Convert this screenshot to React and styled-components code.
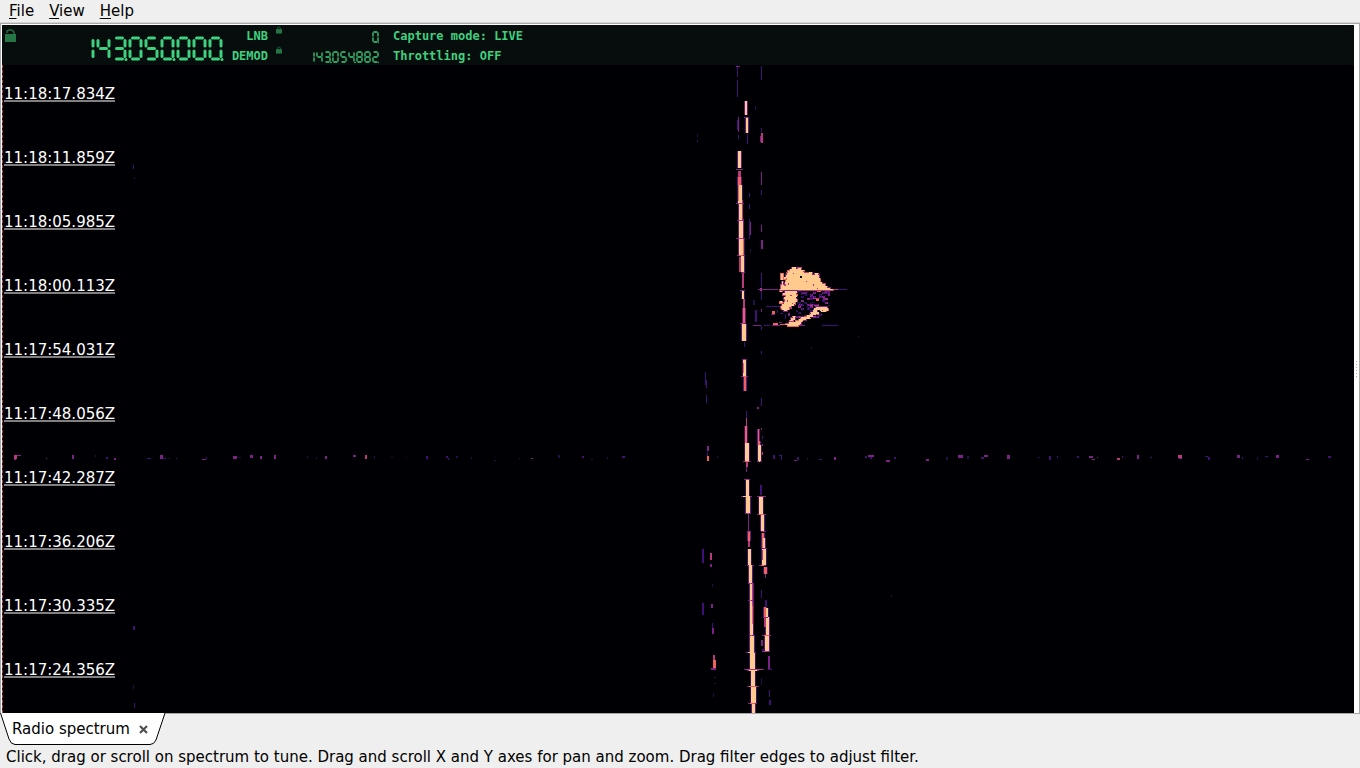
import React from 'react'
import styled, { createGlobalStyle } from 'styled-components';

const GlobalStyle = createGlobalStyle`
    body {
        margin: 0;
        background: #efefef;
        color: #000;
        font-family: "DejaVu Sans", sans-serif;
        font-size: 15px;
    }
`;

// magma palette, weakest signal first
const COLORS = ['#1c1245', '#3f1078', '#7c2287', '#b93a7c', '#f1605d', '#feca8d'];

// [x, y, width, height, level]
const CARRIER = [
    [737, 65, 1, 12, 1], [737, 80, 1, 17, 1], [738, 117, 1, 15, 2], [737, 120, 1, 10, 1], [738, 135, 1, 4, 1],
    [738, 151, 3, 17, 5], [737, 169, 5, 1, 1], [738, 171, 3, 8, 3], [738, 177, 3, 8, 4],
    [738, 185, 4, 18, 5], [738, 185, 1, 16, 4], [742, 200, 1, 20, 3], [739, 203, 3, 17, 5],
    [739, 220, 4, 18, 5], [743, 219, 1, 18, 2], [739, 238, 4, 17, 5], [743, 238, 1, 17, 4],
    [741, 255, 3, 17, 5], [739, 257, 2, 15, 3], [742, 273, 2, 15, 3], [742, 290, 2, 9, 5], [743, 299, 2, 9, 3],
    [743, 308, 2, 15, 4], [742, 324, 4, 17, 5], [744, 342, 1, 5, 1], [743, 359, 3, 17, 5], [743, 363, 1, 10, 4],
    [744, 377, 2, 14, 4], [746, 411, 1, 9, 1], [746, 418, 1, 10, 3], [745, 426, 2, 18, 4],
    [745, 443, 4, 19, 5], [746, 462, 2, 5, 3], [746, 467, 1, 5, 2], [746, 479, 3, 17, 5], [746, 496, 4, 17, 5],
    [748, 514, 1, 17, 2], [748, 531, 2, 10, 4], [748, 541, 2, 6, 3], [748, 549, 3, 17, 5], [749, 566, 3, 17, 5],
    [750, 583, 3, 17, 5], [750, 600, 3, 17, 5], [752, 583, 1, 34, 3], [750, 617, 3, 18, 5], [752, 606, 1, 18, 4],
    [750, 635, 4, 17, 5], [750, 652, 5, 18, 5], [751, 670, 4, 16, 5], [751, 686, 5, 17, 5], [752, 703, 3, 10, 5],
    [745, 101, 2, 14, 5], [746, 118, 2, 15, 5], [747, 134, 1, 10, 1],
];

const SECOND = [
    [758, 429, 1, 16, 4], [758, 441, 2, 5, 4], [758, 445, 3, 17, 5], [761, 428, 1, 2, 2], [762, 436, 1, 3, 1],
    [762, 444, 1, 2, 2], [762, 452, 1, 3, 3], [760, 485, 2, 10, 1], [759, 496, 4, 18, 5], [761, 514, 3, 17, 5],
    [762, 533, 2, 15, 4], [763, 538, 2, 10, 5], [762, 548, 4, 17, 5], [762, 550, 1, 10, 3], [764, 567, 3, 7, 4],
    [765, 574, 1, 4, 2], [761, 590, 1, 8, 1], [765, 600, 2, 7, 1], [764, 607, 2, 10, 4], [766, 608, 2, 10, 5],
    [764, 617, 2, 10, 3], [766, 617, 3, 18, 5], [765, 635, 4, 17, 5], [761, 640, 2, 6, 2], [762, 649, 3, 3, 1],
    [768, 656, 2, 14, 2], [768, 669, 4, 1, 1], [769, 690, 1, 7, 1], [769, 700, 2, 5, 1], [761, 678, 1, 7, 0],
];

const FAINT = [
    [761, 66, 1, 14, 1], [761, 128, 1, 4, 1], [761, 133, 2, 10, 3], [760, 136, 1, 6, 2], [761, 172, 1, 13, 2],
    [761, 190, 1, 5, 1], [761, 225, 1, 7, 2], [761, 240, 2, 9, 2], [761, 273, 1, 14, 1], [761, 291, 1, 9, 1],
    [760, 288, 2, 3, 3], [761, 309, 1, 3, 2], [761, 326, 1, 4, 1], [761, 351, 1, 3, 1], [761, 398, 1, 8, 1],
    [757, 407, 2, 2, 2], [755, 106, 1, 4, 0], [749, 193, 1, 4, 1], [749, 204, 1, 5, 1], [749, 219, 1, 20, 1],
    [750, 222, 1, 13, 2], [750, 249, 1, 4, 0], [753, 300, 2, 5, 0], [755, 310, 2, 12, 1], [697, 134, 1, 3, 0],
    [697, 140, 1, 2, 1], [705, 372, 1, 13, 1], [706, 380, 1, 8, 1], [706, 395, 1, 8, 1], [707, 446, 2, 5, 2],
    [707, 452, 1, 5, 1], [707, 456, 2, 5, 4], [702, 549, 2, 14, 1], [710, 553, 2, 7, 3], [710, 564, 2, 3, 2],
    [712, 584, 1, 3, 0], [702, 603, 2, 12, 1], [711, 604, 2, 4, 2], [712, 623, 1, 6, 1], [712, 628, 2, 6, 2],
    [713, 655, 2, 5, 3], [713, 660, 3, 8, 4], [711, 668, 5, 2, 2], [714, 677, 2, 1, 0], [714, 683, 2, 1, 0],
    [713, 693, 1, 4, 0], [133, 165, 1, 4, 1], [134, 177, 1, 2, 0], [133, 626, 2, 4, 1], [133, 685, 1, 4, 0],
    [134, 703, 1, 5, 1], [811, 347, 1, 2, 0], [891, 595, 1, 2, 0], [858, 336, 1, 1, 0],
];

// horizontal splashes across the carriers: [x, y, width, level]
const SPLASHES = [
    [736, 66, 4, 2], [744, 117, 5, 3], [736, 169, 7, 2], [736, 203, 8, 3], [737, 220, 7, 3], [736, 238, 9, 3],
    [737, 255, 8, 4], [741, 272, 4, 3], [740, 290, 5, 2], [740, 323, 6, 3], [742, 359, 5, 3], [741, 376, 7, 4],
    [743, 461, 8, 4], [757, 461, 5, 5], [744, 479, 6, 3], [741, 496, 11, 5], [745, 513, 6, 3], [747, 531, 4, 3],
    [747, 565, 7, 5], [748, 583, 4, 4], [748, 600, 5, 4], [749, 635, 5, 4], [746, 652, 10, 5], [744, 669, 20, 3],
    [747, 670, 12, 5], [747, 686, 12, 4], [748, 703, 9, 4], [757, 496, 9, 3], [757, 514, 9, 4], [761, 531, 5, 3],
    [759, 565, 7, 4], [762, 548, 5, 3], [763, 617, 5, 3], [762, 635, 9, 4], [762, 651, 8, 3],
];

// one broadband burst across the whole width: [x, y, width, height, level]
const BURST = [
    [14, 455, 3, 4, 3], [17, 455, 4, 1, 2], [14, 459, 2, 1, 2], [46, 458, 1, 1, 2], [72, 455, 2, 4, 2],
    [95, 455, 1, 2, 0], [106, 457, 2, 2, 1], [114, 458, 2, 2, 2], [147, 458, 4, 1, 1], [160, 455, 3, 4, 2],
    [163, 458, 3, 1, 1], [169, 458, 1, 1, 1], [176, 458, 1, 1, 1], [202, 459, 4, 1, 2], [206, 457, 1, 2, 1],
    [233, 456, 4, 3, 2], [238, 457, 3, 1, 0], [250, 455, 3, 3, 2], [260, 456, 2, 3, 2], [274, 455, 2, 4, 2],
    [307, 456, 1, 2, 0], [316, 457, 1, 2, 0], [325, 456, 2, 3, 2], [353, 455, 3, 2, 2], [365, 455, 2, 4, 3],
    [374, 456, 1, 3, 0], [391, 457, 2, 1, 0], [406, 457, 1, 1, 0], [426, 456, 2, 3, 1], [446, 456, 2, 2, 1],
    [448, 458, 1, 2, 1], [456, 456, 2, 2, 0], [471, 457, 1, 2, 0], [494, 460, 2, 1, 0], [519, 458, 1, 1, 0],
    [531, 458, 2, 1, 2], [558, 455, 2, 3, 0], [582, 456, 2, 2, 1], [591, 459, 2, 1, 0], [607, 457, 1, 2, 0],
    [622, 456, 3, 2, 1], [717, 456, 1, 2, 0], [773, 455, 2, 4, 1], [779, 455, 3, 1, 1], [781, 456, 1, 4, 1],
    [794, 460, 3, 1, 2], [797, 457, 2, 3, 1], [807, 458, 1, 2, 0], [819, 459, 3, 1, 1], [834, 457, 2, 3, 2],
    [865, 456, 2, 2, 1], [868, 455, 6, 2, 2], [870, 457, 2, 2, 1], [886, 460, 4, 2, 2], [894, 457, 2, 2, 1],
    [926, 459, 3, 2, 2], [946, 457, 2, 3, 0], [958, 455, 5, 3, 2], [967, 456, 2, 3, 0], [984, 455, 4, 2, 2],
    [981, 457, 3, 2, 1], [1007, 455, 3, 4, 2], [1038, 457, 2, 1, 0], [1049, 456, 2, 4, 1], [1057, 456, 1, 2, 1],
    [1077, 456, 2, 2, 1], [1089, 456, 4, 2, 2], [1092, 459, 3, 1, 2], [1097, 457, 1, 1, 2], [1117, 458, 3, 2, 3],
    [1122, 456, 1, 2, 1], [1137, 455, 2, 4, 2], [1150, 457, 2, 1, 1], [1178, 455, 4, 3, 3], [1179, 458, 3, 1, 2],
    [1205, 456, 3, 1, 1], [1208, 457, 2, 3, 1], [1237, 455, 3, 3, 2], [1242, 457, 1, 2, 1], [1257, 457, 1, 3, 0],
    [1265, 456, 3, 1, 1], [1276, 455, 3, 3, 2], [1306, 459, 3, 1, 2], [1328, 456, 3, 2, 1],
];

// meteor echo, bright runs: [y, x, width, rows]
const ECHO = [
    [267, 792, 4, 2], [268, 798, 3, 2], [269, 790, 8, 1], [270, 790, 11, 1], [270, 801, 3, 2], [271, 788, 16, 2],
    [272, 809, 3, 2], [273, 787, 25, 2], [273, 815, 3, 2], [275, 786, 33, 3], [278, 787, 33, 2],
    [280, 786, 34, 2], [282, 785, 37, 2], [284, 786, 39, 2], [286, 784, 43, 2], [288, 783, 47, 1],
    [289, 780, 53, 1], [274, 781, 2, 6], [281, 782, 1, 4], [285, 781, 3, 4], [277, 784, 2, 2],
    [291, 785, 12, 2], [293, 783, 13, 2], [295, 786, 11, 2], [297, 784, 12, 2], [299, 785, 12, 3], [302, 784, 11, 2],
    [304, 782, 12, 2], [306, 781, 10, 2], [308, 782, 7, 2], [310, 784, 3, 1], [291, 780, 2, 1], [301, 780, 2, 2],
    [307, 816, 11, 2], [308, 814, 14, 2], [310, 820, 8, 1], [310, 813, 4, 2], [311, 821, 5, 1], [312, 811, 8, 2],
    [314, 810, 6, 1], [315, 807, 6, 2], [317, 801, 9, 2], [319, 799, 7, 1],
    [320, 799, 4, 1], [316, 793, 2, 2], [318, 791, 4, 2], [320, 790, 3, 1], [321, 796, 6, 1], [322, 789, 12, 2],
    [324, 786, 14, 1], [325, 788, 10, 1],
];

const noise = (x, y) => {
    const n = Math.sin(x * 127.1 + y * 311.7) * 43758.5453;
    return n - Math.floor(n);
};

// weak scatter filling the hollow of the echo
const scatter = () => {
    const dots = [];
    for (let y = 291; y < 318; y += 1) {
        for (let x = 796; x < 830; x += 1) {
            const n = noise(Math.floor(x / 3), Math.floor(y / 2)) * 0.8 + noise(x, y) * 0.2;
            if (n > 0.54 && x + y < 1136) dots.push([x, y, 1, 1, n > 0.93 ? 3 : n > 0.78 ? 2 : n > 0.64 ? 1 : 0]);
        }
    }
    return dots;
};
const SCATTER = scatter();

const ECHO_LINES = [
    [758, 289, 20, 1, 2], [832, 289, 6, 1, 3], [838, 289, 9, 1, 1], [766, 306, 14, 1, 1], [753, 325, 8, 1, 2],
    [764, 325, 6, 1, 1], [773, 323, 5, 2, 4], [772, 325, 8, 1, 2], [780, 324, 6, 1, 4], [779, 322, 3, 1, 2],
    [787, 326, 12, 1, 4], [799, 325, 6, 1, 2], [822, 325, 16, 1, 1], [772, 311, 3, 3, 4], [771, 314, 4, 1, 2],
    [777, 310, 1, 3, 1], [780, 313, 3, 1, 1], [785, 314, 1, 5, 1], [788, 313, 2, 3, 2], [817, 291, 4, 1, 4],
    [813, 298, 6, 1, 3], [816, 299, 3, 2, 4], [823, 296, 2, 4, 2], [825, 302, 3, 1, 2], [814, 305, 5, 1, 3],
];
const ECHO_HOLES = [
    [800, 276, 2, 2], [788, 283, 1, 2], [806, 281, 1, 1], [813, 284, 1, 2], [790, 295, 2, 1], [787, 300, 1, 2],
    [793, 273, 1, 1], [789, 307, 2, 1], [803, 271, 2, 1], [817, 288, 1, 1], [822, 310, 1, 1], [792, 303, 1, 1],
];

const Blocks = ({ data }) => data.map(([x, y, w, h, level], i) => (
    <rect key={i} x={x} y={y} width={w} height={h} fill={COLORS[level]} />
));

// soft purple edge around strong signals
const Edges = ({ data }) => data.filter((d) => d[4] >= 4).map(([x, y, w, h], i) => (
    <rect key={i} x={x - 1} y={y} width={w + 2} height={h} fill={noise(x, y) > 0.4 ? '#5a1a80' : '#35125f'} />
));

const Spectrogram = () => (
    <Plot viewBox="2 65 1352 648" preserveAspectRatio="none" shapeRendering="crispEdges" role="img" aria-label="Waterfall">
        <Edges data={CARRIER} />
        <Edges data={SECOND} />
        <Blocks data={FAINT} />
        <Blocks data={BURST} />
        <Blocks data={CARRIER} />
        <Blocks data={SECOND} />
        {SPLASHES.map(([x, y, w, level], i) => (
            <g key={i}>
                <rect x={x} y={y} width={w} height={1} fill={COLORS[2]} />
                <rect x={x + 2} y={y} width={Math.max(w - 4, 1)} height={1} fill={COLORS[level]} />
            </g>
        ))}
        {ECHO.map(([y, x, w, h], i) => (
            <rect key={i} x={x - 1} y={y - (i % 2)} width={w + 2} height={h + 1} fill={COLORS[2 + (i % 3)]} />
        ))}
        <Blocks data={SCATTER} />
        <Blocks data={ECHO_LINES} />
        {ECHO.map(([y, x, w, h], i) => (
            <rect key={i} x={x} y={y} width={w} height={h} fill={COLORS[5]} />
        ))}
        {ECHO_HOLES.map(([x, y, w, h], i) => (
            <rect key={i} x={x} y={y} width={w} height={h} fill={i ? COLORS[3] : '#000004'} />
        ))}
    </Plot>
);

// which of the segments a..g are lit
const SEGMENTS = {
    0: 'abcdef', 1: 'bc', 2: 'abged', 3: 'abgcd', 4: 'fgbc', 5: 'afgcd', 8: 'abcdefg',
};

const SevenSegment = ({ value, label, large }) => {
    const [pitch, w, h, t] = large ? [16, 11, 21, 3] : [8, 5, 10, 1.3];
    const gap = large ? 2.5 : 1;
    const lines = {
        a: [gap, 0, w - gap, 0],
        b: [w, gap, w, h / 2 - gap],
        c: [w, h / 2 + gap, w, h - gap],
        d: [gap, h, w - gap, h],
        e: [0, h / 2 + gap, 0, h - gap],
        f: [0, gap, 0, h / 2 - gap],
        g: [gap, h / 2, w - gap, h / 2],
    };
    const digits = value.replace(/\./g, '');
    const width = digits.length * pitch;
    return (
        <Readout width={width} height={h + 4} viewBox={`-2 -2 ${width} ${h + 4}`} role="img" aria-label={`${label} ${value}`}>
            {digits.split('').map((d, i) => (
                <g key={i} transform={`translate(${i * pitch} 0)`} stroke="#3fd07f" strokeWidth={t} strokeLinecap="round">
                    {SEGMENTS[d].split('').map((s) => (
                        <line key={s} x1={lines[s][0]} y1={lines[s][1]} x2={lines[s][2]} y2={lines[s][3]} />
                    ))}
                    {(digits.length - i) % 3 === 1 && <circle cx={w + 1} cy={h + 0.5} r={large ? 1.5 : 0.8} stroke="none" fill="#3fd07f" />}
                </g>
            ))}
        </Readout>
    );
};

const Padlock = ({ open, size }) => (
    <svg width={size} height={size + 2} viewBox="0 0 11 13" aria-hidden="true">
        <path d={open ? 'M2 4V2L4 1h3l2 2v3' : 'M3 6V3l1.500-2h2L8 3v3'} fill="none" stroke="#1f6a3e" strokeWidth="1.500" />
        <rect x="0" y="5" width="11" height="8" fill="#257547" />
    </svg>
);

const TIMES = [
    '11:18:17.834Z', '11:18:11.859Z', '11:18:05.985Z', '11:18:00.113Z', '11:17:54.031Z',
    '11:17:48.056Z', '11:17:42.287Z', '11:17:36.206Z', '11:17:30.335Z', '11:17:24.356Z',
];

const App = () => (
    <Page>
        <GlobalStyle />
        <MenuBar>
            <MenuButton><u>F</u>ile</MenuButton>
            <MenuButton><u>V</u>iew</MenuButton>
            <MenuButton><u>H</u>elp</MenuButton>
        </MenuBar>
        <Workspace>
            <Spectrum>
                <Hud>
                    <LockButton aria-label="Lock frequency"><Padlock open size={11} /></LockButton>
                    <MainFrequency>
                        <SevenSegment large value="143.050.000" label="Frequency" />
                    </MainFrequency>
                    <HudNames>
                        <HudText>LNB</HudText>
                        <HudText>DEMOD</HudText>
                    </HudNames>
                    <HudLocks>
                        <LockButton $small aria-label="Lock LNB"><Padlock size={6} /></LockButton>
                        <LockButton $small aria-label="Lock demodulator"><Padlock size={6} /></LockButton>
                    </HudLocks>
                    <HudValues>
                        <SevenSegment value="0" label="LNB" />
                        <SevenSegment value="143.054.882" label="Demodulator" />
                    </HudValues>
                    <HudStatus>
                        <HudText>Capture mode: LIVE</HudText>
                        <HudText>Throttling: OFF</HudText>
                    </HudStatus>
                </Hud>
                <Waterfall>
                    <Spectrogram />
                    <TimeAxis>
                        {TIMES.map((time) => <TimeMark key={time}><Stamp>{time}</Stamp></TimeMark>)}
                    </TimeAxis>
                </Waterfall>
            </Spectrum>
            <Sash>
                <Grip /><Grip /><Grip /><Grip /><Grip /><Grip />
            </Sash>
        </Workspace>
        <TabBar>
            <Tab>
                <TabShape width="166" height="32" viewBox="0 0 166 32" aria-hidden="true">
                    <path d="M0 0L9 26Q11 31 15 31H150Q154 31 156 27L165 0Z" fill="#fff" />
                    <path d="M0.500 0L9 26Q11 31.500 15 31.500H150Q154 31.500 156 27L165 0" fill="none" stroke="#000" />
                </TabShape>
                <TabButton>Radio spectrum</TabButton>
                <CloseButton aria-label="Close tab">
                    <svg width="9" height="9" viewBox="0 0 9 9" aria-hidden="true">
                        <path d="M1 1L8 8M8 1L1 8" stroke="#505050" strokeWidth="2.200" />
                    </svg>
                </CloseButton>
            </Tab>
            <TabLine />
        </TabBar>
        <StatusBar>Click, drag or scroll on spectrum to tune. Drag and scroll X and Y axes for pan and zoom. Drag filter edges to adjust filter.</StatusBar>
    </Page>
)


const Page = styled.div`
    display: flex;
    flex-direction: column;
    height: 100vh;
    overflow: hidden;
`;

const Button = styled.button`
    border: 0;
    padding: 0;
    background: none;
    color: inherit;
    font: inherit;
`;

const MenuBar = styled.nav`
    display: flex;
    gap: 15px;
    height: 22px;
    padding-left: 9px;
    border-bottom: 1px solid #d4d4d4;
`;

const MenuButton = styled(Button)`
    line-height: 22px;

    u {
        text-underline-offset: 2px;
    }
`;

const Workspace = styled.main`
    display: flex;
    flex: 1;
    min-height: 0;
    border: 1px solid #a8a8a8;
    border-bottom: 0;
    background: #fff;
    padding: 1px 0 0 1px;
`;

const Spectrum = styled.section`
    display: flex;
    flex: 1;
    flex-direction: column;
    background: #000004;
`;

const Hud = styled.header`
    display: flex;
    height: 40px;
    background: #070d0d;
    color: #3fd07f;
`;

const LockButton = styled(Button)`
    display: flex;
    justify-content: center;
    width: ${(props) => (props.$small ? '8px' : '16px')};
    height: 20px;
    padding-top: ${(props) => (props.$small ? '1px' : '4px')};
`;

const MainFrequency = styled.div`
    display: flex;
    justify-content: flex-end;
    align-items: center;
    width: 206px;
    padding-top: 6px;
`;

const HudNames = styled.div`
    width: 44px;
    padding-top: 1px;
    text-align: right;
`;

const HudText = styled.div`
    font: bold 12px/20px "DejaVu Sans Mono", monospace;
    white-space: nowrap;
`;

const HudLocks = styled.div`
    width: 16px;
    padding-left: 7px;
`;

const HudValues = styled.div`
    display: flex;
    flex-direction: column;
    align-items: flex-end;
    gap: 6px;
    width: 88px;
    padding-top: 5px;
`;

const HudStatus = styled.div`
    padding: 1px 0 0 14px;
`;

const Readout = styled.svg`
    display: block;
    flex: none;
`;

const Waterfall = styled.div`
    position: relative;
    flex: 1;
    min-height: 0;
`;

const Plot = styled.svg`
    display: block;
    width: 100%;
    height: 100%;
`;

const TimeAxis = styled.div`
    position: absolute;
    top: 0;
    bottom: 0;
    left: 0;
    padding-left: 2px;

    &::before {
        content: "";
        position: absolute;
        top: 0;
        bottom: 0;
        left: 0;
        width: 1px;
        background: repeating-linear-gradient(#b04048 0 3px, #280808 3px 5px);
    }
`;

const TimeMark = styled.div`
    display: flex;
    align-items: flex-end;
    height: 64px;

    &:first-child {
        height: 37px;
    }
`;

const Stamp = styled.time`
    border-bottom: 2px solid #808080;
    color: #fff;
    line-height: 11px;
`;

const Sash = styled.div`
    display: flex;
    flex-direction: column;
    justify-content: center;
    align-items: center;
    gap: 2px;
    width: 5px;
`;

const Grip = styled.div`
    width: 1px;
    height: 1px;
    background: #b0b0b0;
`;

const TabBar = styled.div`
    display: flex;
    height: 32px;
`;

const Tab = styled.div`
    position: relative;
    display: flex;
    align-items: center;
    gap: 9px;
    width: 153px;
    padding-left: 12px;
`;

const TabShape = styled.svg`
    position: absolute;
    top: 0;
    left: 0;
`;

const TabButton = styled(Button)`
    position: relative;
    line-height: 30px;
`;

const CloseButton = styled(Button)`
    position: relative;
    display: flex;
`;

const TabLine = styled.div`
    flex: 1;
    border-top: 1px solid #a8a8a8;
`;

const StatusBar = styled.footer`
    height: 23px;
    padding-left: 6px;
    line-height: 24px;
    white-space: nowrap;
`;

export default App;
